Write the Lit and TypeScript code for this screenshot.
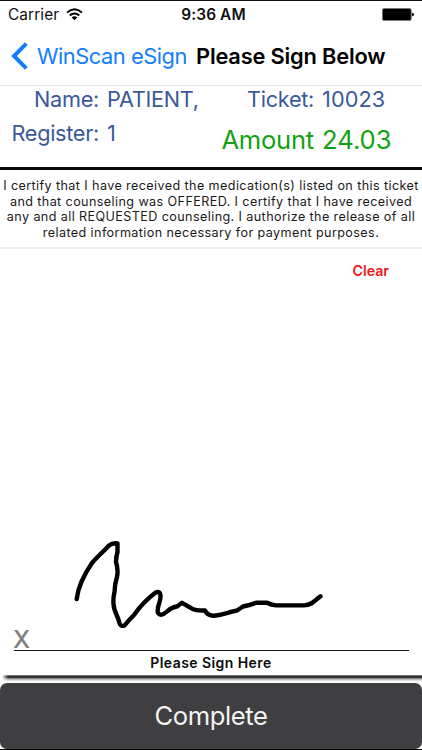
import { LitElement, html, css } from "lit";
import { customElement } from "lit/decorators.js";

@customElement("status-bar")
class StatusBar extends LitElement {
  static styles = css`
    :host {
      display: grid;
      grid-template-columns: 1fr auto 1fr;
      align-items: center;
      box-sizing: border-box;
      height: 29px;
      border-top: 1px solid #111;
      padding: 0 8px 0 8px;
      font-size: 15.4px;
      line-height: 28px;
      color: #111;
      white-space: nowrap;
    }
    .left { display: flex; align-items: center; gap: 7px; }
    .carrier { letter-spacing: 0.1px; }
    .time { font-weight: 600; letter-spacing: 0.1px; padding: 0 0 0 5px; }
    .right { display: flex; justify-content: flex-end; }
    svg { display: block; }
    .wifi { margin-top: -2px; }
    .battery { margin-top: -1px; }
  `;
  render() {
    return html`
      <div class="left">
        <span class="carrier">Carrier</span>
        <svg class="wifi" width="17" height="13" viewBox="0 0 17 13" fill="none" stroke="#000" stroke-width="1.9">
          <path d="M1 4.6Q8.5-2 16 4.6" />
          <path d="M3.7 7.5Q8.5 3.3 13.3 7.5" />
          <path d="M8.5 12.3L5.7 9.5Q8.5 7.1 11.3 9.5Z" fill="#000" stroke="none" />
        </svg>
      </div>
      <span class="time">9:36 AM</span>
      <div class="right">
        <svg class="battery" width="32" height="13" viewBox="0 0 32 13">
          <rect x="0.4" y="0.5" width="28.8" height="12" rx="1.6" fill="#000" stroke="#777" stroke-width="0.8" />
          <path d="M30 4.7Q32 5 32 6.5T30 8.4Z" fill="#000" />
        </svg>
      </div>
    `;
  }
}

@customElement("nav-header")
class NavHeader extends LitElement {
  static styles = css`
    :host {
      display: flex;
      align-items: center;
      box-sizing: border-box;
      height: 57px;
      border-bottom: 1px solid #e4e4e4;
      padding: 0 0 2px 11px;
      font-size: 21.8px;
      line-height: 54px;
      white-space: nowrap;
    }
    svg { display: block; flex: none; }
    .back { width: 151px; margin-left: 9px; color: #147efb; letter-spacing: -0.45px; }
    .title { margin-left: 8px; color: #000; font-weight: 600; letter-spacing: -0.17px; }
  `;
  render() {
    return html`
      <svg width="17" height="28" viewBox="0 0 17 28" fill="none" stroke="#147efb" stroke-width="4">
        <path d="M15.3 1.7L3 14L15.3 26.3" />
      </svg>
      <span class="back">WinScan eSign</span>
      <span class="title">Please Sign Below</span>
    `;
  }
}

@customElement("ticket-info")
class TicketInfo extends LitElement {
  static styles = css`
    :host {
      display: grid;
      grid-template-columns: 211px 211px;
      box-sizing: border-box;
      height: 84px;
      border-bottom: 3px solid #080808;
      color: #3b5998;
      font-size: 21.7px;
      line-height: 34px;
      letter-spacing: -0.3px;
      white-space: nowrap;
    }
    .column { display: grid; grid-template-columns: 99px 1fr; column-gap: 8px; align-content: start; margin-top: -4px; }
    .column.second { grid-template-columns: 103px 1fr; column-gap: 8px; }
    .label { text-align: right; }
    .second .value { letter-spacing: 0.1px; }
    .label.amount { color: #12a112; font-size: 25.6px; line-height: 47px; letter-spacing: -0.25px; }
    .value.amount { color: #12a112; font-size: 25.6px; line-height: 47px; letter-spacing: 0; }
  `;
  render() {
    return html`
      <div class="column">
        <span class="label">Name:</span><span class="value">PATIENT,</span>
        <span class="label">Register:</span><span class="value">1</span>
      </div>
      <div class="column second">
        <span class="label">Ticket:</span><span class="value">10023</span>
        <span class="label amount">Amount</span><span class="value amount">24.03</span>
      </div>
    `;
  }
}

@customElement("certify-text")
class CertifyText extends LitElement {
  static styles = css`
    :host {
      display: flex;
      flex-direction: column;
      align-items: center;
      box-sizing: border-box;
      height: 79px;
      border-bottom: 2px solid #f0f0f0;
      padding-top: 8px;
      font-size: 12.6px;
      line-height: 15.7px;
      letter-spacing: 0.4px;
      color: #1a1a1a;
      white-space: nowrap;
    }
  `;
  render() {
    return [
      "I certify that I have received the medication(s) listed on this ticket",
      "and that counseling was OFFERED. I certify that I have received",
      "any and all REQUESTED counseling. I authorize the release of all",
      "related information necessary for payment purposes.",
    ].map((line) => html`<span>${line}</span>`);
  }
}

const SIGNATURE =
  "M76.700 599C78 588 83 576 92 563C97 557 104 551 109 545.5Q113 542.5 117.5 543.5V552Q116 557 116 562Q118.500 570 117 577Q114.500 585 114.500 592Q113 598 113.500 604C114 612 118 616 119.500 623Q120.500 627 124.500 625.500Q128 621 134 615Q143 602 155 593Q160 590 160.500 596C161 602 156 608 158 613Q161 617 167 611.500Q172 607 177 606.500L182 602.800L191 608Q195 611 205 610.500Q207 615 213 615.800C220 616 229 612 237 610.500L243 606.500Q250 605 256 602.800H267Q271 605 276 605.400H304Q308 605.400 312 603L320.500 596.300";

@customElement("signature-pad")
class SignaturePad extends LitElement {
  static styles = css`
    :host {
      display: flex;
      flex-direction: column;
      height: 434px;
      background: #fff;
      margin-left: 2px;
    }
    .clear { align-self: flex-end; margin: 11px 33px 0 0; font-size: 14.2px; line-height: 22px; font-weight: 600; color: #ee1719; }
    .ink { display: block; width: 260px; height: 100px; margin: 254px 0 0 68px; flex: none; }
    .mark { margin: -9px 0 0 11px; font-size: 24.5px; line-height: 24px; height: 23px; font-weight: 500; color: #808080; }
    .rule { width: 395px; height: 1px; flex: none; margin-left: 12px; background: #111; }
    .hint { margin-top: 2px; text-align: center; font-size: 14px; line-height: 20px; font-weight: 600; color: #0a0a0a; letter-spacing: 0.43px; padding-right: 2px; }
    .shade {
      margin-top: 2px;
      height: 7px;
      flex: none;
      background: linear-gradient(#777 0 1px, #2c2c2c 1px 2px, #3d3d3d 2px 3px, #868686 3px 4px, #bbb 4px 5px, #e2e2e2 5px 6px, #f6f6f6 6px);
      mask-image: linear-gradient(90deg, transparent, #000 6px);
    }
  `;
  render() {
    return html`
      <span class="clear">Clear</span>
      <svg class="ink" viewBox="70 536 260 100">
        <path d=${SIGNATURE} fill="none" stroke="#000" stroke-width="4.4" stroke-linecap="round" stroke-linejoin="round" />
      </svg>
      <span class="mark">X</span>
      <div class="rule"></div>
      <span class="hint">Please Sign Here</span>
      <div class="shade"></div>
    `;
  }
}

@customElement("app-root")
class AppRoot extends LitElement {
  static styles = css`
    :host {
      display: flex;
      flex-direction: column;
      box-sizing: border-box;
      width: 422px;
      height: 750px;
      overflow: hidden;
      background: #fff;
      border-bottom: 1px solid #050505;
      font-family: Inter, "Liberation Sans", sans-serif;
    }
    .complete {
      height: 66px;
      border: 0;
      padding: 0;
      border-radius: 7px;
      background: #3f3e40;
      color: #f4f4f4;
      font: 400 25.6px/66px Inter, "Liberation Sans", sans-serif;
      letter-spacing: -0.4px;
      flex: none;
      text-align: center;
    }
  `;
  render() {
    return html`
      <status-bar></status-bar>
      <nav-header></nav-header>
      <ticket-info></ticket-info>
      <certify-text></certify-text>
      <signature-pad></signature-pad>
      <button class="complete">Complete</button>
    `;
  }
}
